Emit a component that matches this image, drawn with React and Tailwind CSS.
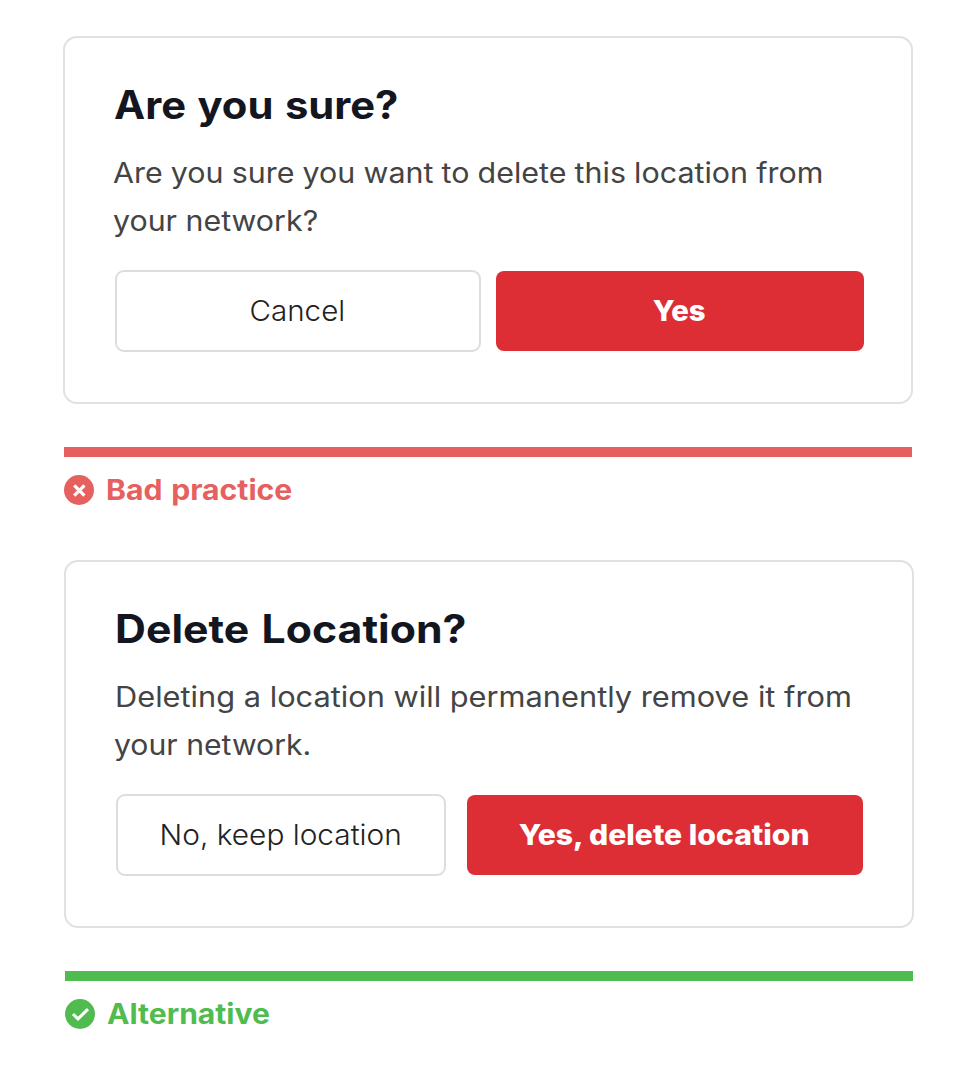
function CrossIcon() {
  return (
    <svg viewBox="0 0 30 30" className="size-[30px] shrink-0" aria-hidden="true">
      <circle cx="15" cy="15" r="15" fill="#e66060" />
      <path d="M10.2 10.4 20.4 20.6M20.4 10.4 10.2 20.6" fill="none" stroke="#fff" strokeWidth="3.2" />
    </svg>
  );
}

function CheckIcon() {
  return (
    <svg viewBox="0 0 30 30" className="size-[30px] shrink-0" aria-hidden="true">
      <circle cx="15" cy="15" r="15" fill="#50bc50" />
      <path d="M8 15 13 19.8 23 10.2" fill="none" stroke="#fff" strokeWidth="3.1" />
    </svg>
  );
}

function Dialog({ title, body, actions }) {
  return (
    <div className="h-[368px] w-[850px] rounded-[14px] border-2 border-[#e1e1e1] pt-[43px] pl-[49px]">
      <h2 className="text-[39px] leading-[48px] font-bold whitespace-nowrap text-[#14161f]">{title}</h2>
      <p className="mt-5 flex flex-col items-start text-[28px] leading-[48px] whitespace-nowrap text-[#444444]">{body}</p>
      <div className="mt-[25px] flex items-center text-[28px]">{actions}</div>
    </div>
  );
}

const outlineButton =
  "flex h-[82px] items-center justify-center rounded-[9px] border-2 border-[#dddddd] font-light whitespace-nowrap text-[#222222]";
const dangerButton =
  "flex h-20 items-center justify-center rounded-lg bg-[#dd2e35] font-extrabold whitespace-nowrap text-white";

export default function App() {
  return (
    <main className="flex min-h-[1082px] w-[976px] flex-col bg-white pt-9 font-['Inter','Liberation_Sans',sans-serif]">
      <section className="ml-[63px] h-[524px]">
        <Dialog
          title={<span className="inline-block origin-left scale-x-[1.07] [word-spacing:1.5px]">Are you sure?</span>}
          body={
            <>
              <span className="-ml-px origin-left scale-x-[1.087] [word-spacing:-0.4px]">
                Are you sure you want to delete this location from
              </span>
              <span className="-ml-px origin-left scale-x-[1.084]">your network?</span>
            </>
          }
          actions={
            <>
              <button className={`${outlineButton} ml-px w-[366px]`}>
                <span className="-ml-px scale-x-[1.055]">Cancel</span>
              </button>
              <button className={`${dangerButton} ml-[15px] w-[368px]`}>
                <span className="-ml-px scale-x-[1.046]">Yes</span>
              </button>
            </>
          }
        />
        <div className="mt-[43px] ml-px h-[10px] w-[848px] bg-[#e66060]" />
        <div className="mt-[18px] ml-px flex items-center gap-3">
          <CrossIcon />
          <span className="-mt-px origin-left scale-x-[1.077] text-[28px] leading-[30px] font-bold text-[#e66060] [word-spacing:1.5px]">
            Bad practice
          </span>
        </div>
      </section>

      <section className="ml-16 h-[522px]">
        <Dialog
          title={<span className="inline-block origin-left scale-x-[1.097] [word-spacing:2px]">Delete Location?</span>}
          body={
            <>
              <span className="origin-left scale-x-[1.099]">Deleting a location will permanently remove it from</span>
              <span className="-ml-px origin-left scale-x-[1.078]">your network.</span>
            </>
          }
          actions={
            <>
              <button className={`${outlineButton} ml-px w-[330px]`}>
                <span className="scale-x-[1.065]">No, keep location</span>
              </button>
              <button className={`${dangerButton} ml-[21px] w-[396px]`}>
                <span className="-ml-px scale-x-[1.075]">Yes, delete location</span>
              </button>
            </>
          }
        />
        <div className="mt-[43px] ml-px h-[10px] w-[848px] bg-[#50bc50]" />
        <div className="mt-[18px] ml-px flex items-center gap-3">
          <CheckIcon />
          <span className="-mt-px origin-left scale-x-[1.074] text-[28px] leading-[30px] font-bold text-[#50bc50]">Alternative</span>
        </div>
      </section>
    </main>
  );
}
